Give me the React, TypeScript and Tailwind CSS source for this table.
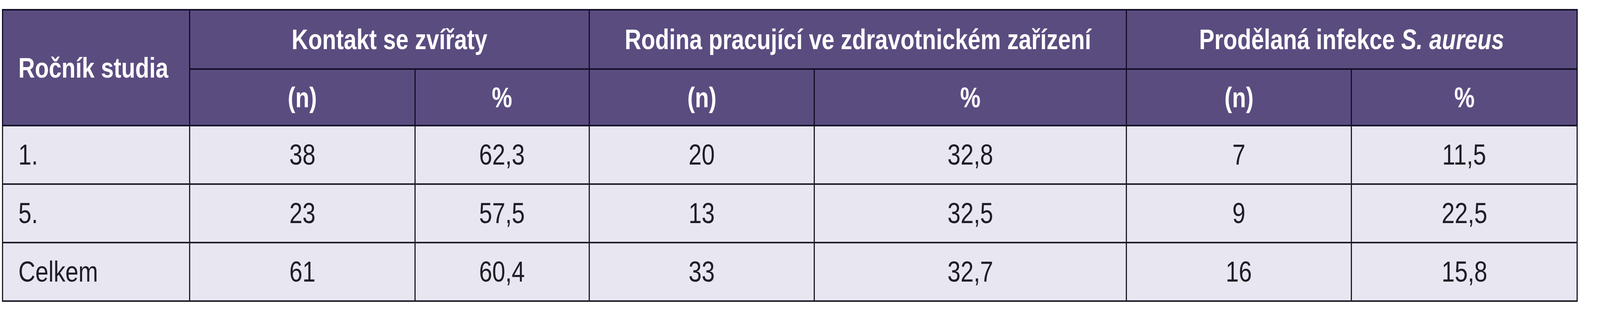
import React from "react";

const rows = [
  ["1.", "38", "62,3", "20", "32,8", "7", "11,5"],
  ["5.", "23", "57,5", "13", "32,5", "9", "22,5"],
  ["Celkem", "61", "60,4", "33", "32,7", "16", "15,8"],
];

const hd = "bg-[#5b4c80] text-white font-bold border-[#130e27] border-y-[4px] border-x-[3px] align-middle p-0";
const td = "bg-[#e8e6f0] text-[#1e1e24] border-[#1f1f28] border-y-[4px] border-x-[3px] align-middle p-0";

function C({ children, left }: { children: React.ReactNode; left?: boolean }) {
  return (
    <div className={left ? "flex justify-start pl-[39px]" : "flex justify-center"}>
      <span className={"shrink-0 whitespace-nowrap scale-x-[0.813] " + (left ? "origin-left" : "origin-center")}>{children}</span>
    </div>
  );
}

export default function App() {
  return (
    <div className="w-full h-[800px] bg-white pt-[23px] pl-[5px]" style={{ fontFamily: '"Liberation Sans", Arial, sans-serif' }}>
      <table className="table-fixed border-collapse w-[4031px]">
        <colgroup>
          <col className="w-[479px]" />
          <col className="w-[577px]" />
          <col className="w-[446px]" />
          <col className="w-[576px]" />
          <col className="w-[799px]" />
          <col className="w-[576px]" />
          <col className="w-[578px]" />
        </colgroup>
        <thead>
          <tr className="h-[152px] text-[72px] leading-none">
            <th rowSpan={2} className={hd}>
              <C left>Ročník studia</C>
            </th>
            <th colSpan={2} className={hd}>
              <C>Kontakt se zvířaty</C>
            </th>
            <th colSpan={2} className={hd}>
              <C>Rodina pracující ve zdravotnickém zařízení</C>
            </th>
            <th colSpan={2} className={hd}>
              <C>
                Prodělaná infekce <i>S. aureus</i>
              </C>
            </th>
          </tr>
          <tr className="h-[145px] text-[72px] leading-none">
            {["(n)", "%", "(n)", "%", "(n)", "%"].map((t, i) => (
              <th key={i} className={hd}>
                <C>{t}</C>
              </th>
            ))}
          </tr>
        </thead>
        <tbody>
          {rows.map((r, i) => (
            <tr key={i} className="h-[150px] text-[74px] leading-none">
              {r.map((c, j) => (
                <td key={j} className={td}>
                  <C left={j === 0}>{c}</C>
                </td>
              ))}
            </tr>
          ))}
        </tbody>
      </table>
    </div>
  );
}
